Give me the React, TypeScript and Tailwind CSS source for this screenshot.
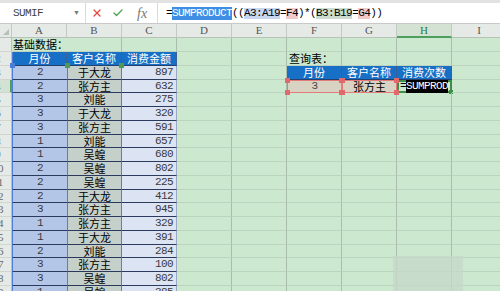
import { X, Check } from "lucide-react";

const cjk = "font-['Noto_Sans_CJK_SC',sans-serif]";
const mono = "font-['Liberation_Mono',monospace]";
const serif = "font-['Liberation_Serif',serif]";

const cols = ["A", "B", "C", "D", "E", "F", "G", "H", "I"];

// rows 3..19 of the base table
const data = [
	{ m: "2", n: "于大龙", v: "897" },
	{ m: "2", n: "张方主", v: "632" },
	{ m: "3", n: "刘能", v: "275" },
	{ m: "3", n: "于大龙", v: "320" },
	{ m: "3", n: "张方主", v: "591" },
	{ m: "1", n: "刘能", v: "657" },
	{ m: "1", n: "吴蝗", v: "680" },
	{ m: "2", n: "吴蝗", v: "802" },
	{ m: "2", n: "吴蝗", v: "225" },
	{ m: "2", n: "于大龙", v: "412" },
	{ m: "3", n: "张方主", v: "945" },
	{ m: "1", n: "张方主", v: "329" },
	{ m: "1", n: "于大龙", v: "391" },
	{ m: "2", n: "刘能", v: "284" },
	{ m: "3", n: "张方主", v: "100" },
	{ m: "3", n: "吴蝗", v: "802" },
	{ m: "1", n: "吴蝗", v: "385" },
];

const grid =
	"relative flex h-full w-[55px] shrink-0 items-center border-r border-b border-r-[#a9bdac] border-b-[#bcd3bf]";
const head = `relative flex h-full w-[55px] shrink-0 items-center justify-center border-r border-b border-r-[#3a6099] border-b-[#24406e] bg-[#176fc6] text-[11px] leading-none text-white ${cjk}`;

const Handle = ({ pos, color }: { pos: string; color: string }) => (
	<span className={`absolute z-10 h-[5px] w-[5px] ${pos} ${color}`} />
);

const Cell = ({ r, c }: { r: number; c: string }) => {
	const d = r >= 3 ? data[r - 3] : undefined;

	if (r === 1 && c === "A")
		return (
			<div className={`relative flex h-full w-[55px] shrink-0 items-center overflow-visible whitespace-nowrap border-b border-b-[#bcd3bf] pl-[1px] text-[11px] leading-none text-black ${cjk}`}>
				基础数据：
			</div>
		);
	if (r === 2 && c === "A")
		return (
			<div className={`${head} border-l border-l-[#4d7fd8]`}>
				月份
			</div>
		);
	if (r === 2 && c === "B") return <div className={head}>客户名称</div>;
	if (r === 2 && c === "C") return <div className={head}>消费金额</div>;
	if (r === 2 && c === "F")
		return (
			<div className={`${grid} pl-[2px] text-[11px] leading-none text-black ${cjk}`}>
				查询表：
			</div>
		);
	if (r === 3 && c === "F") return <div className={head}>月份</div>;
	if (r === 3 && c === "G") return <div className={head}>客户名称</div>;
	if (r === 3 && c === "H") return <div className={head}>消费次数</div>;
	if (r === 4 && (c === "F" || c === "G"))
		return (
			<div className={`relative flex h-full w-[55px] shrink-0 items-center justify-center border border-[#e37b7b] bg-[#d9d3c4] text-[11px] leading-none ${c === "F" ? `${mono} tracking-[-0.6px] text-[#444]` : `${cjk} text-black`}`}>
				{c === "F" ? "3" : "张方主"}
				<Handle pos="-left-[3px] -top-[3px]" color="bg-[#e0696c]" />
				<Handle pos="-right-[3px] -top-[3px]" color="bg-[#e0696c]" />
				<Handle pos="-left-[3px] -bottom-[3px]" color="bg-[#e0696c]" />
				<Handle pos="-right-[3px] -bottom-[3px]" color="bg-[#e0696c]" />
			</div>
		);
	if (r === 4 && c === "H")
		return (
			<div className={`relative flex h-full w-[55px] shrink-0 items-center border-2 border-[#3d8f48] pl-[1px] text-[11px] leading-none tracking-[-0.6px] text-black ${mono}`}>
				=<span className="bg-black py-[1px] text-white">SUMPROD</span>
				<span className="absolute -bottom-[3px] -right-[3px] h-[4px] w-[4px] bg-[#3d8f48]" />
			</div>
		);
	if (d && c === "A")
		return (
			<div className={`relative flex h-full w-[55px] shrink-0 items-center justify-center border-l border-b border-l-[#4d7fd8] border-b-[#2b3a5c] bg-[#b4c6e7] text-[11px] leading-none tracking-[-0.6px] text-[#3a3a3a] ${mono}`}>
				{d.m}
				{r === 3 && <Handle pos="-left-[3px] -top-[3px]" color="bg-[#4d7fd8]" />}
			</div>
		);
	if (d && c === "B")
		return (
			<div className={`relative flex h-full w-[55px] shrink-0 items-center justify-center border-x border-b border-x-[#4c9a54] border-b-[#2b3a5c] bg-[#c6d0cb] text-[11px] leading-none text-black ${cjk}`}>
				{d.n}
				{r === 3 && <Handle pos="-left-[3px] -top-[3px]" color="bg-[#4c9a54]" />}
				{r === 3 && <Handle pos="-right-[3px] -top-[3px]" color="bg-[#4c9a54]" />}
			</div>
		);
	if (d && c === "C")
		return (
			<div className={`relative flex h-full w-[55px] shrink-0 items-center justify-end border-r border-b border-r-[#9aa8c4] border-b-[#2b3a5c] bg-[#dce3f3] pr-[3px] text-[11px] leading-none tracking-[-0.6px] text-[#3a3a3a] ${mono}`}>
				{d.v}
			</div>
		);
	return <div className={grid} />;
};

const Row = ({ r }: { r: number }) => {
	const active = r === 4;
	return (
		<div className={`flex ${r % 4 === 0 ? "h-[13px]" : "h-[14px]"}`}>
			<div
				className={`flex h-full w-[12px] shrink-0 items-center overflow-hidden border-b border-b-[#cfd6cf] text-[11px] leading-none ${serif} ${
					active
						? "border-r-2 border-r-[#4f9f5c] bg-[#d3e2d3] text-[#2f7d3b]"
						: "border-r border-r-[#b8c2b8] bg-[#e6eae6] text-[#666]"
				}`}
			>
				<div className="-ml-[17px] w-[30px] shrink-0 text-center">{r}</div>
			</div>
			{cols.map((c) => (
				<Cell key={c} r={r} c={c} />
			))}
		</div>
	);
};

const FormulaBar = () => (
	<div className="bg-[#e2e2e2] pt-[3px]">
		<div className="flex h-[21px] border-b border-[#c9c9c9] bg-white">
			<div className="flex w-[86px] shrink-0 items-center justify-between border-r border-[#dadada] pl-[13px] pr-[5px]">
				<span className={`text-[11px] tracking-[-0.6px] text-[#444] ${mono}`}>SUMIF</span>
				<span className="text-[7px] text-[#777]">▼</span>
			</div>
			<div className="flex w-[71px] shrink-0 items-center gap-[9px] pl-[5px]">
				<X size={12} strokeWidth={2.6} className="text-[#e2463f]" />
				<Check size={12} strokeWidth={2.6} className="text-[#4aa34c]" />
				<span className={`ml-[4px] text-[14px] italic text-[#777] ${serif}`}>fx</span>
			</div>
			<div className={`flex flex-1 items-center whitespace-nowrap border-l border-[#dadada] pl-[8px] text-[11px] leading-none tracking-[-0.6px] text-black ${mono}`}>
				=<span className="bg-[#3f8ee6] py-[1px] text-white">SUMPRODUCT</span>((
				<span className="bg-[#c9d6f0]">A3:A19</span>=<span className="bg-[#f3c9c7]">F4</span>)*(
				<span className="bg-[#cddccf]">B3:B19</span>=<span className="bg-[#f3c9c7]">G4</span>))
			</div>
		</div>
	</div>
);

const ColumnHeader = () => (
	<div className={`flex h-[14px] text-[11px] leading-none ${serif}`}>
		<div className="relative h-full w-[12px] shrink-0 border-r border-b border-r-[#c3cac3] border-b-[#b8c2b8] bg-[#e6eae6]">
			<svg className="absolute bottom-[2px] right-[2px]" width="6" height="6" viewBox="0 0 6 6">
				<path d="M6 0 L6 6 L0 6 Z" fill="#b9bfb9" />
			</svg>
		</div>
		{cols.map((c) => (
			<div
				key={c}
				className={`flex h-full w-[55px] shrink-0 items-center justify-center border-r border-r-[#c3cac3] ${
					c === "H"
						? "border-b-2 border-b-[#4f9f5c] bg-[#d3e2d3] text-[#2f7d3b]"
						: "border-b border-b-[#b8c2b8] bg-[#e6eae6] text-[#555]"
				}`}
			>
				{c}
			</div>
		))}
	</div>
);

export default function App() {
	const rows = Array.from({ length: 19 }, (_, i) => i + 1);
	return (
		<div className="relative h-[291px] w-[500px] overflow-hidden bg-[#cce8cf]">
			<FormulaBar />
			<ColumnHeader />
			{rows.map((r) => (
				<Row key={r} r={r} />
			))}
			<div className="absolute left-[393px] top-[256px] h-[35px] w-[70px] bg-[#c6d8c8]/80" />
		</div>
	);
}
